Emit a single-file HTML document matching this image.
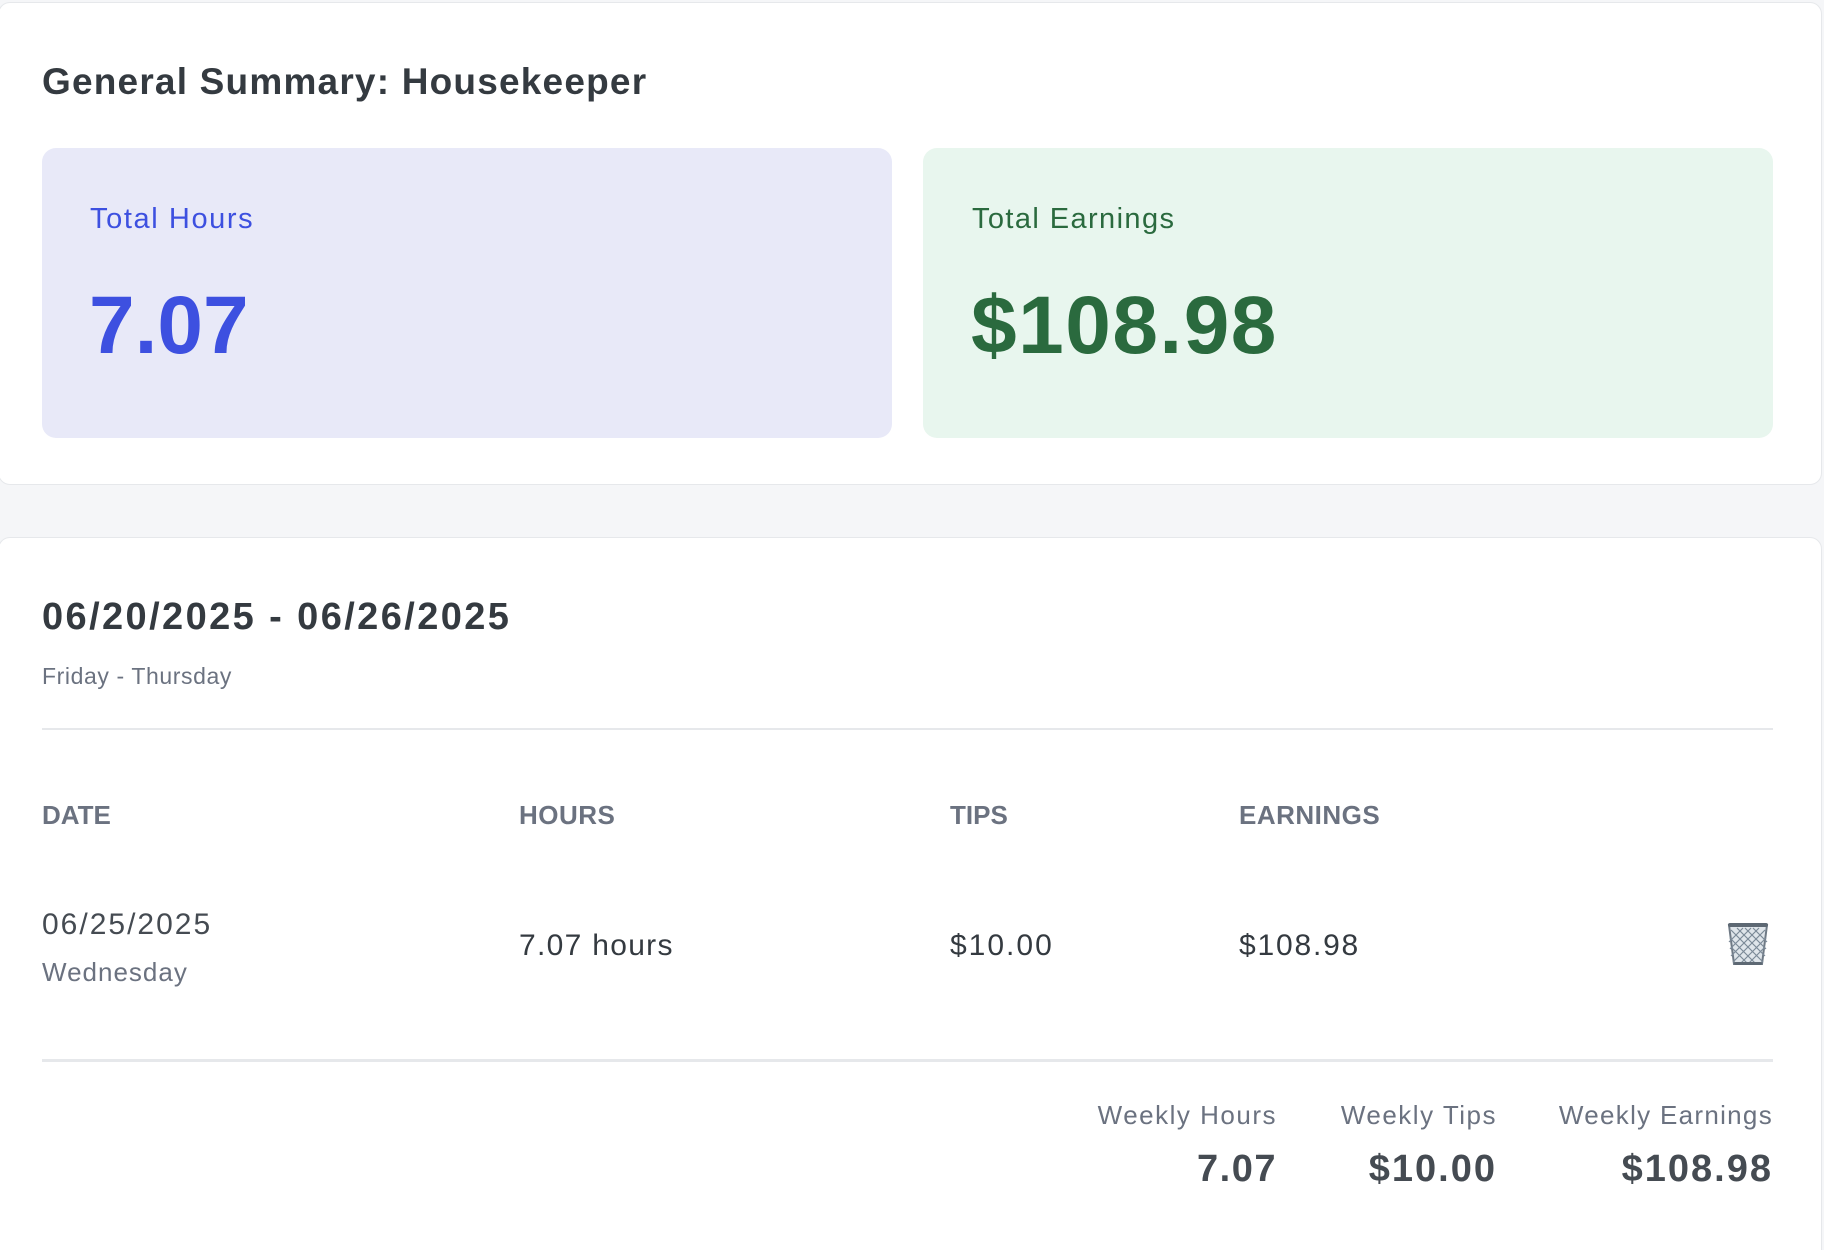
<!DOCTYPE html>
<html style="width:1824px;height:1250px;overflow:hidden"><head><meta charset="utf-8"><style>
*{box-sizing:border-box;margin:0;padding:0}
body{width:1824px;height:1250px;background:#f5f6f8;font-family:"Liberation Sans",sans-serif;position:relative;overflow:hidden;color:#343a40}
.card{position:absolute;background:#fff;border:1px solid #e6e8eb;border-radius:12px}
.a{position:absolute;white-space:nowrap;line-height:1}
.g{color:#6b7280}
</style></head><body>
<div class="card" style="left:-2px;top:2px;width:1824px;height:483px"></div>
<div class="a" style="left:42px;top:63px;font-size:37px;font-weight:bold;color:#343a40;letter-spacing:1.2px">General Summary: Housekeeper</div>
<div style="position:absolute;left:42px;top:148px;width:850px;height:290px;background:#e8e9f8;border-radius:14px"></div>
<div style="position:absolute;left:923px;top:148px;width:850px;height:290px;background:#e8f6ee;border-radius:14px"></div>
<div class="a" style="left:90px;top:205px;font-size:29px;color:#3d50e0;letter-spacing:1.6px">Total Hours</div>
<div class="a" style="left:89px;top:285px;font-size:82px;font-weight:bold;color:#3d50e0">7.07</div>
<div class="a" style="left:972px;top:205px;font-size:29px;color:#2a6a3e;letter-spacing:1.4px">Total Earnings</div>
<div class="a" style="left:971px;top:285px;font-size:82px;font-weight:bold;color:#2a6a3e;letter-spacing:1.5px">$108.98</div>

<div class="card" style="left:-2px;top:537px;width:1824px;height:760px"></div>
<div class="a" style="left:42px;top:598px;font-size:38px;font-weight:bold;color:#343a40;letter-spacing:2.4px">06/20/2025 - 06/26/2025</div>
<div class="a g" style="left:42px;top:665px;font-size:23px;letter-spacing:0.6px">Friday - Thursday</div>
<div style="position:absolute;left:42px;top:728px;width:1731px;height:2px;background:#e6e8eb"></div>
<div class="a g" style="left:42px;top:802px;font-size:26px;font-weight:600">DATE</div>
<div class="a g" style="left:519px;top:802px;font-size:26px;font-weight:600;letter-spacing:0.5px">HOURS</div>
<div class="a g" style="left:950px;top:802px;font-size:26px;font-weight:600">TIPS</div>
<div class="a g" style="left:1239px;top:802px;font-size:26px;font-weight:600;letter-spacing:0.5px">EARNINGS</div>
<div class="a" style="left:42px;top:910px;font-size:30px;color:#454b52;letter-spacing:2px">06/25/2025</div>
<div class="a g" style="left:42px;top:959px;font-size:26px;letter-spacing:1px">Wednesday</div>
<div class="a" style="left:519px;top:931px;font-size:30px;color:#343a40;letter-spacing:1.3px">7.07 hours</div>
<div class="a" style="left:950px;top:931px;font-size:30px;color:#343a40;letter-spacing:2px">$10.00</div>
<div class="a" style="left:1239px;top:931px;font-size:30px;color:#343a40;letter-spacing:1.8px">$108.98</div>
<svg style="position:absolute;left:1725px;top:920px" width="46" height="48" viewBox="0 0 46 48">
<path d="M4 5 L42 5 L37 44 L9 44 Z" fill="#dfe5ea" stroke="#6f7a85" stroke-width="2"/>
<g stroke="#7c8a98" stroke-width="1.2" fill="none">
<path d="M6 10 L38 42 M12 8 L40 36 M20 8 L41 29 M28 8 L42 22 M5 18 L30 43 M6 27 L22 43"/>
<path d="M40 10 L8 42 M34 8 L6 36 M26 8 L5 29 M18 8 L4 22 M41 18 L16 43 M40 27 L24 43"/>
</g>
<rect x="3" y="3" width="40" height="4" rx="2" fill="#5d6873"/>
<rect x="9" y="42" width="28" height="3" rx="1.5" fill="#5d6873"/>
</svg>
<div style="position:absolute;left:42px;top:1059px;width:1731px;height:3px;background:#e6e8eb"></div>
<div class="a g" style="right:547px;top:1102px;font-size:26px;letter-spacing:1.5px">Weekly Hours</div>
<div class="a g" style="right:327px;top:1102px;font-size:26px;letter-spacing:1.5px">Weekly Tips</div>
<div class="a g" style="right:51px;top:1102px;font-size:26px;letter-spacing:1.3px">Weekly Earnings</div>
<div class="a" style="right:547px;top:1150px;font-size:38px;font-weight:bold;color:#454b52;letter-spacing:1.5px">7.07</div>
<div class="a" style="right:327px;top:1150px;font-size:38px;font-weight:bold;color:#454b52;letter-spacing:2px">$10.00</div>
<div class="a" style="right:51px;top:1150px;font-size:38px;font-weight:bold;color:#454b52;letter-spacing:2px">$108.98</div>
</body></html>
